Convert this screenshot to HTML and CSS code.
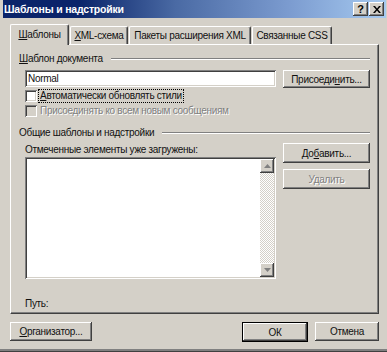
FILE: index.html
```html
<!DOCTYPE html>
<html lang="ru">
<head>
<meta charset="utf-8">
<title>Шаблоны и надстройки</title>
<link rel="stylesheet" href="styles.css">
</head>
<body>
<div class="dialog">
  <div class="titlebar">
    <span class="title">Шаблоны и надстройки</span>
    <div class="tb-btns">
      <span class="tb-btn help">?</span>
      <span class="tb-btn close"><svg width="8" height="7" viewBox="0 0 8 7"><path d="M0 0h2l2 2.5 2-2.5h2l-3 3.5 3 3.5h-2l-2-2.5-2 2.5h-2l3-3.5z" fill="#000"/></svg></span>
    </div>
  </div>
  <div class="tabs">
    <div class="tab active"><u>Ш</u>аблоны</div>
    <div class="tab"><u>X</u>ML-схема</div>
    <div class="tab">Пакеты расширения XML</div>
    <div class="tab">Связанные CSS</div>
  </div>
  <div class="panel">
    <div class="group-title"><span><u>Ш</u>аблон документа</span><i class="etch"></i></div>
    <div class="attach-row">
      <div class="input">Normal</div>
      <div class="btn attach">Присоеди<u>н</u>ить...</div>
    </div>
    <div class="check-row first">
      <span class="box"></span>
      <span class="label focus"><u>А</u>втоматически обновлять стили</span>
    </div>
    <div class="check-row second disabled">
      <span class="box"></span>
      <span class="label">Присоединять ко всем новым сообщениям</span>
    </div>
    <div class="group-title second"><span>Общие шаблоны и надстройки</span><i class="etch"></i></div>
    <div class="addins">
      <div class="addins-left">
        <div class="list-label">Отмеченные элементы уже загружены:</div>
        <div class="list">
          <div class="list-body"></div>
          <div class="scrollbar">
            <span class="sb-btn"><svg width="7" height="4" viewBox="0 0 7 4"><path d="M3.5 0 7 4H0z" fill="#808080"/></svg></span>
            <span class="sb-track"></span>
            <span class="sb-btn"><svg width="7" height="4" viewBox="0 0 7 4"><path d="M0 0h7L3.5 4z" fill="#808080"/></svg></span>
          </div>
        </div>
      </div>
      <div class="addins-right">
        <div class="btn">До<u>б</u>авить...</div>
        <div class="btn disabled">Удалить</div>
      </div>
    </div>
    <div class="path">Путь:</div>
  </div>
  <div class="footer">
    <div class="btn organizer"><u>О</u>рганизатор...</div>
    <div class="footer-right">
      <div class="btn default">ОК</div>
      <div class="btn cancel">Отмена</div>
    </div>
  </div>
</div>
</body>
</html>
```
FILE: styles.css
```css
* { box-sizing: border-box; }
html, body {
  margin: 0;
  padding: 0;
  background: #d4d0c8;
}
body {
  width: 387px;
  height: 352px;
  overflow: hidden;
  font-family: "Liberation Sans", Arial, sans-serif;
  font-size: 10px;
  letter-spacing: -0.3px;
  color: #111;
}
u { text-decoration: underline; text-underline-offset: 1px; }

.dialog {
  height: 352px;
  padding: 0 1px 0 3px;
  border-bottom: 1px solid #404040;
  box-shadow: inset 0 -2px 0 #808080;
}

.titlebar {
  height: 18px;
  display: flex;
  align-items: center;
  justify-content: space-between;
  padding: 0 2px 0 1px;
  background: linear-gradient(to right, #0a246a 0%, #0a246a 20%, #4a6aa4 45%, #7c9cd0 75%, #a6caf0 100%);
}
.title {
  color: #fff;
  font-weight: bold;
  font-size: 10.5px;
  letter-spacing: -0.2px;
}
.tb-btns { display: flex; gap: 1px; }
.tb-btn {
  width: 15px;
  height: 14px;
  background: #d4d0c8;
  display: flex;
  align-items: center;
  justify-content: center;
  font-weight: bold;
  font-size: 11px;
  letter-spacing: 0;
  line-height: 1;
  color: #000;
  box-shadow: inset -1px -1px #404040, inset 1px 1px #fff, inset -2px -2px #808080;
}

.tabs {
  display: flex;
  align-items: flex-end;
  height: 20px;
  margin: 6px 0 0 7px;
  position: relative;
  z-index: 1;
}
.tab {
  height: 18px;
  padding: 0 4px;
  display: flex;
  align-items: center;
  justify-content: center;
  border-top: 1px solid #fff;
  border-left: 1px solid #fff;
  border-right: 1px solid #404040;
  box-shadow: inset -1px 0 #808080;
  border-radius: 2px 2px 0 0;
  white-space: nowrap;
  margin-right: 1px;
}
.tab:nth-child(2) { width: 58px; }
.tab:nth-child(3) { width: 122px; }
.tab:nth-child(4) { width: 80px; }
.tab.active {
  height: 21px;
  width: 59px;
  margin-bottom: -1px;
  background: #d4d0c8;
  padding-bottom: 2px;
}

.panel {
  margin-left: 7px;
  width: 369px;
  height: 270px;
  border-top: 1px solid #fff;
  border-left: 1px solid #fff;
  border-right: 1px solid #404040;
  border-bottom: 1px solid #404040;
  box-shadow: inset -1px -1px #808080;
  padding: 0 8px 0 14px;
}

.group-title {
  display: flex;
  align-items: center;
  height: 13px;
  margin: 7px 0 0 -6px;
  white-space: nowrap;
}
.group-title.second { margin-top: 9px; }
.etch {
  flex: 1;
  height: 2px;
  margin-left: 8px;
  border-top: 1px solid #808080;
  border-bottom: 1px solid #fff;
}

.attach-row {
  display: flex;
  justify-content: space-between;
  margin-top: 5px;
  height: 18px;
}
.input {
  width: 251px;
  height: 17px;
  background: #fff;
  padding: 2px 0 0 3px;
  box-shadow: inset 1px 1px #808080, inset -1px -1px #fff, inset 2px 2px #404040, inset -2px -2px #d4d0c8;
  line-height: 13px;
}
.btn {
  height: 19px;
  display: flex;
  align-items: center;
  justify-content: center;
  white-space: nowrap;
  background: #d4d0c8;
  box-shadow: inset -1px -1px #404040, inset 1px 1px #fff, inset -2px -2px #808080;
}
.btn.attach { width: 87px; height: 18px; }
.btn.disabled { color: #808080; text-shadow: 1px 1px #fff; }

.check-row {
  display: flex;
  align-items: center;
  height: 12px;
  margin-top: 2px;
}
.check-row.second { margin-top: 3px; }
.box {
  width: 12px;
  height: 12px;
  background: #fff;
  box-shadow: inset 1px 1px #808080, inset -1px -1px #fff, inset 2px 2px #404040, inset -2px -2px #d4d0c8;
  margin-right: 2px;
}
.disabled .box { background: #d4d0c8; }
.disabled .label { color: #808080; text-shadow: 1px 1px #fff; }
.label {
  padding: 0 1px;
  line-height: 12px;
  white-space: nowrap;
}
.label.focus { outline: 1px dotted #000; outline-offset: 0; }

.addins {
  display: flex;
  justify-content: space-between;
  margin-top: 4px;
}
.addins-left { width: 251px; }
.list-label { height: 14px; line-height: 13px; white-space: nowrap; }
.list {
  height: 122px;
  display: flex;
  background: #fff;
  padding: 2px;
  box-shadow: inset 1px 1px #808080, inset -1px -1px #fff, inset 2px 2px #404040, inset -2px -2px #d4d0c8;
}
.list-body { flex: 1; }
.scrollbar {
  width: 14px;
  display: flex;
  flex-direction: column;
}
.sb-btn {
  height: 14px;
  display: flex;
  align-items: center;
  justify-content: center;
  background: #d4d0c8;
  box-shadow: inset -1px -1px #404040, inset 1px 1px #fff, inset -2px -2px #808080;
}
.sb-track {
  flex: 1;
  background: repeating-conic-gradient(#d4d0c8 0 25%, #fff 0 50%) 0 0 / 2px 2px;
}
.addins-right {
  width: 87px;
  display: flex;
  flex-direction: column;
  gap: 6px;
}
.addins-right .btn { height: 20px; }

.path {
  margin-top: 18px;
  height: 13px;
  line-height: 13px;
}

.footer {
  display: flex;
  justify-content: space-between;
  margin: 8px 7px 0 7px;
}
.footer-right { display: flex; gap: 7px; }
.btn.organizer { width: 82px; }
.btn.default {
  width: 66px;
  height: 20px;
  border: 1px solid #000;
}
.btn.cancel { width: 64px; }
```
